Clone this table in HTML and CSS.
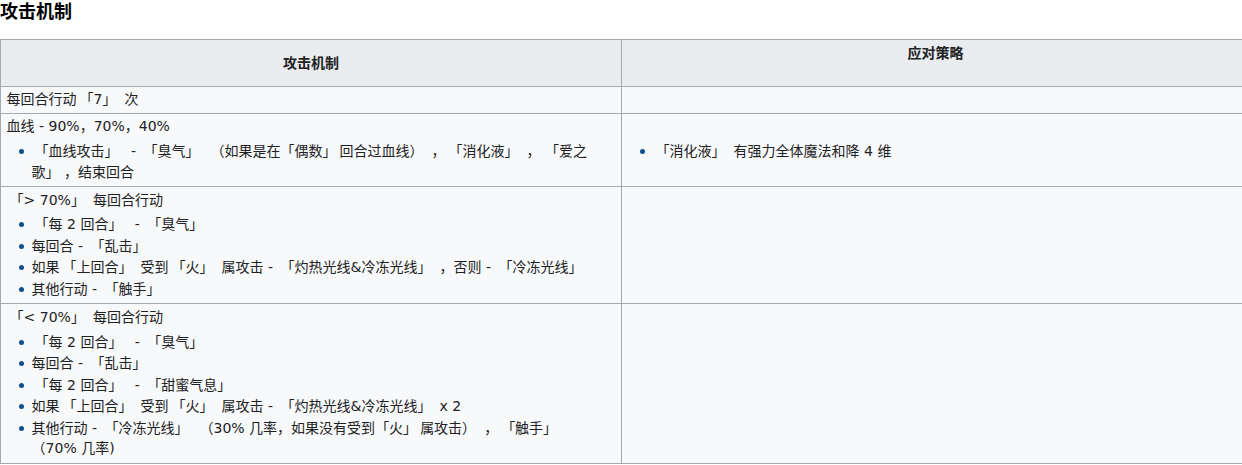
FILE: index.html
```html
<!DOCTYPE html>
<html lang="zh">
<head>
<meta charset="utf-8">
<link rel="stylesheet" href="styles.css">
</head>
<body>
<div class="page">
  <h3 class="section-title">攻击机制</h3>
  <table class="wikitable">
    <colgroup><col class="col-a"><col class="col-b"></colgroup>
    <thead>
      <tr>
        <th>攻击机制</th>
        <th>应对策略<br>&nbsp;</th>
      </tr>
    </thead>
    <tbody>
      <tr>
        <td>每回合行动<span class="q">「7」</span>次</td>
        <td></td>
      </tr>
      <tr>
        <td>血线 - 90%，70%，40%
          <ul>
            <li><span class="q">「血线攻击」</span> - <span class="q">「臭气」</span><span class="q">（如果是在<span class="q">「偶数」</span>回合过血线）</span>，<span class="q">「消化液」</span>，&nbsp;「爱之<span class="tail">歌」&nbsp;，结束回合</span></li>
          </ul>
        </td>
        <td>
          <ul>
            <li><span class="q">「消化液」</span>有强力全体魔法和降 4 维</li>
          </ul>
        </td>
      </tr>
      <tr>
        <td><span class="q">「&gt; 70%」</span>每回合行动
          <ul>
            <li><span class="q">「每 2 回合」</span> - <span class="q">「臭气」</span></li>
            <li>每回合 - <span class="q">「乱击」</span></li>
            <li>如果<span class="q">「上回合」</span>受到<span class="q">「火」</span>属攻击 - <span class="q">「灼热光线&amp;冷冻光线」</span>，否则 - <span class="q">「冷冻光线」</span></li>
            <li>其他行动 - <span class="q">「触手」</span></li>
          </ul>
        </td>
        <td></td>
      </tr>
      <tr>
        <td><span class="q">「&lt; 70%」</span>每回合行动
          <ul>
            <li><span class="q">「每 2 回合」</span> - <span class="q">「臭气」</span></li>
            <li>每回合 - <span class="q">「乱击」</span></li>
            <li><span class="q">「每 2 回合」</span> - <span class="q">「甜蜜气息」</span></li>
            <li>如果<span class="q">「上回合」</span>受到<span class="q">「火」</span>属攻击 - <span class="q">「灼热光线&amp;冷冻光线」</span>x 2</li>
            <li>其他行动 - <span class="q">「冷冻光线」</span><span class="q">（30% 几率，如果没有受到<span class="q">「火」</span>属攻击）</span>，<span class="q">「触手」</span><span class="tail">（70%&nbsp;几率)</span></li>
          </ul>
        </td>
        <td></td>
      </tr>
    </tbody>
  </table>
</div>
</body>
</html>
```
FILE: styles.css
```css
html, body {
  margin: 0;
  padding: 0;
  background: #ffffff;
  overflow: hidden;
}
body {
  font-family: "DejaVu Sans", "Noto Sans CJK SC", sans-serif;
  font-size: 14px;
  color: #202122;
  text-spacing-trim: space-all;
}
.page {
  width: 1242px;
  overflow: hidden;
}
.section-title {
  margin: 0;
  padding-top: 0;
  height: 39px;
  font-size: 18px;
  line-height: 24px;
  font-weight: bold;
  color: #000;
}
.wikitable {
  border-collapse: collapse;
  table-layout: fixed;
  width: 1250px;
  background: #f8f9fa;
  border: 1px solid #a2a9b1;
  line-height: 20.5px;
}
.col-a { width: 621px; }
.wikitable th,
.wikitable td {
  border: 1px solid #a2a9b1;
  padding: 2.8px 5.6px;
}
.wikitable th {
  background: #eaecf0;
  font-weight: bold;
  text-align: center;
  vertical-align: middle;
  line-height: 20px;
}
.wikitable td {
  vertical-align: middle;
}
.q {
  padding: 0 8px 0 3px;
}
.q .q {
  padding: 0 3px 0 0;
}
.tail {
  white-space: normal;
}
.wikitable ul {
  margin: 4.2px 0 0 25px;
  padding: 0;
  list-style: none;
}
.wikitable li {
  margin-bottom: 1px;
  position: relative;
}
.wikitable li::before {
  content: "";
  position: absolute;
  left: -13px;
  top: 8px;
  width: 5px;
  height: 5px;
  border-radius: 50%;
  background: #0e4f8c;
}
```
